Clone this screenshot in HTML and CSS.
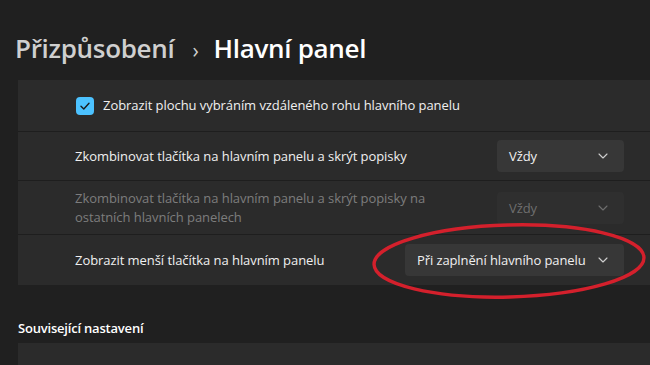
FILE: index.html
```html
<!DOCTYPE html>
<html lang="cs">
<head>
<meta charset="utf-8">
<link rel="stylesheet" href="styles.css">
</head>
<body>
<div class="page">
  <h1 class="crumbs"><span class="parent">Přizpůsobení</span><span class="sep">›</span><span class="current">Hlavní panel</span></h1>
  <div class="card">
    <div class="row row-check">
      <span class="checkbox"><svg viewBox="0 0 18 18" width="18" height="18"><path d="M5 9.3 L7.8 12 L13 6.3" fill="none" stroke="#1a1a1a" stroke-width="1.4" stroke-linecap="round" stroke-linejoin="round"/></svg></span>
      <span class="label">Zobrazit plochu vybráním vzdáleného rohu hlavního panelu</span>
    </div>
    <div class="row row-combine">
      <span class="label">Zkombinovat tlačítka na hlavním panelu a skrýt popisky</span>
      <span class="select small"><span>Vždy</span><svg class="chev" viewBox="0 0 10 6" width="10" height="6"><path d="M1 1 L5 5 L9 1" fill="none" stroke="currentColor" stroke-width="1.1" stroke-linecap="round" stroke-linejoin="round"/></svg></span>
    </div>
    <div class="row disabled">
      <span class="label">Zkombinovat tlačítka na hlavním panelu a skrýt popisky na ostatních hlavních panelech</span>
      <span class="select small"><span>Vždy</span><svg class="chev" viewBox="0 0 10 6" width="10" height="6"><path d="M1 1 L5 5 L9 1" fill="none" stroke="currentColor" stroke-width="1.1" stroke-linecap="round" stroke-linejoin="round"/></svg></span>
    </div>
    <div class="row last">
      <span class="label">Zobrazit menší tlačítka na hlavním panelu</span>
      <span class="select wide"><span>Při zaplnění hlavního panelu</span><svg class="chev" viewBox="0 0 10 6" width="10" height="6"><path d="M1 1 L5 5 L9 1" fill="none" stroke="currentColor" stroke-width="1.1" stroke-linecap="round" stroke-linejoin="round"/></svg></span>
    </div>
  </div>
  <h2 class="section">Související nastavení</h2>
  <div class="card card2"></div>
  <svg class="circle" viewBox="0 0 290 90" width="290" height="90"><ellipse cx="145" cy="42" rx="135" ry="36" transform="rotate(-1.5 145 42)" fill="none" stroke="#d4202c" stroke-width="3.4"/></svg>
</div>
</body>
</html>
```
FILE: styles.css
```css
* { box-sizing: border-box; }
html, body { margin: 0; padding: 0; }
body {
  background: #202020;
  color: #ffffff;
  font-family: "Open Sans", "Noto Sans", sans-serif;
  width: 650px;
  height: 365px;
  overflow: hidden;
}
.page { position: relative; height: 365px; }
.crumbs {
  margin: 0;
  height: 80px;
  padding: 30px 0 0 15px;
  font-size: 26px;
  font-weight: 600;
  line-height: 36px;
  display: flex;
  align-items: baseline;
  letter-spacing: -0.3px;
}
.parent { color: #cfcfcf; }
.sep { color: #cfcfcf; font-size: 21px; margin: 0 15px 0 18px; font-weight: 400; }
.current { color: #ffffff; }
.card {
  margin-left: 18px;
  background: #2b2b2b;
}
.row {
  display: flex;
  align-items: center;
  justify-content: space-between;
  height: 51px;
  padding: 0 26px 0 57px;
  border-bottom: 1px solid #1e1e1e;
  font-size: 13px;
  color: #f0f0f0;
}
.row.row-check { height: 52px; justify-content: flex-start; padding-left: 58px; }
.row.row-combine { height: 49px; }
.row.disabled { height: 54px; }
.row.last { height: 50px; border-bottom: none; }
.label { letter-spacing: -0.06px; line-height: 19px; }
.row.disabled .label { color: #7d7d7d; max-width: 380px; }
.checkbox {
  width: 18px;
  height: 18px;
  border-radius: 4px;
  background: #4cc2ff;
  margin-right: 9px;
  display: flex;
}
.select {
  display: flex;
  align-items: center;
  justify-content: space-between;
  height: 32px;
  background: #373737;
  border-radius: 4px;
  padding: 0 16px 0 12px;
  font-size: 13px;
  color: #f0f0f0;
  letter-spacing: -0.1px;
}
.select.small { width: 127px; }
.select.wide { width: 219px; padding-left: 12px; }
.chev { color: #cfcfcf; }
.row.disabled .select { background: #2f2f2f; color: #6e6e6e; }
.row.disabled .chev { color: #6e6e6e; }
.section {
  margin: 0;
  padding: 33px 0 0 18px;
  height: 58px;
  font-size: 13px;
  font-weight: 600;
  line-height: 20px;
  letter-spacing: -0.2px;
  color: #ffffff;
}
.card2 { height: 30px; }
.circle { position: absolute; left: 364px; top: 219px; }
```
